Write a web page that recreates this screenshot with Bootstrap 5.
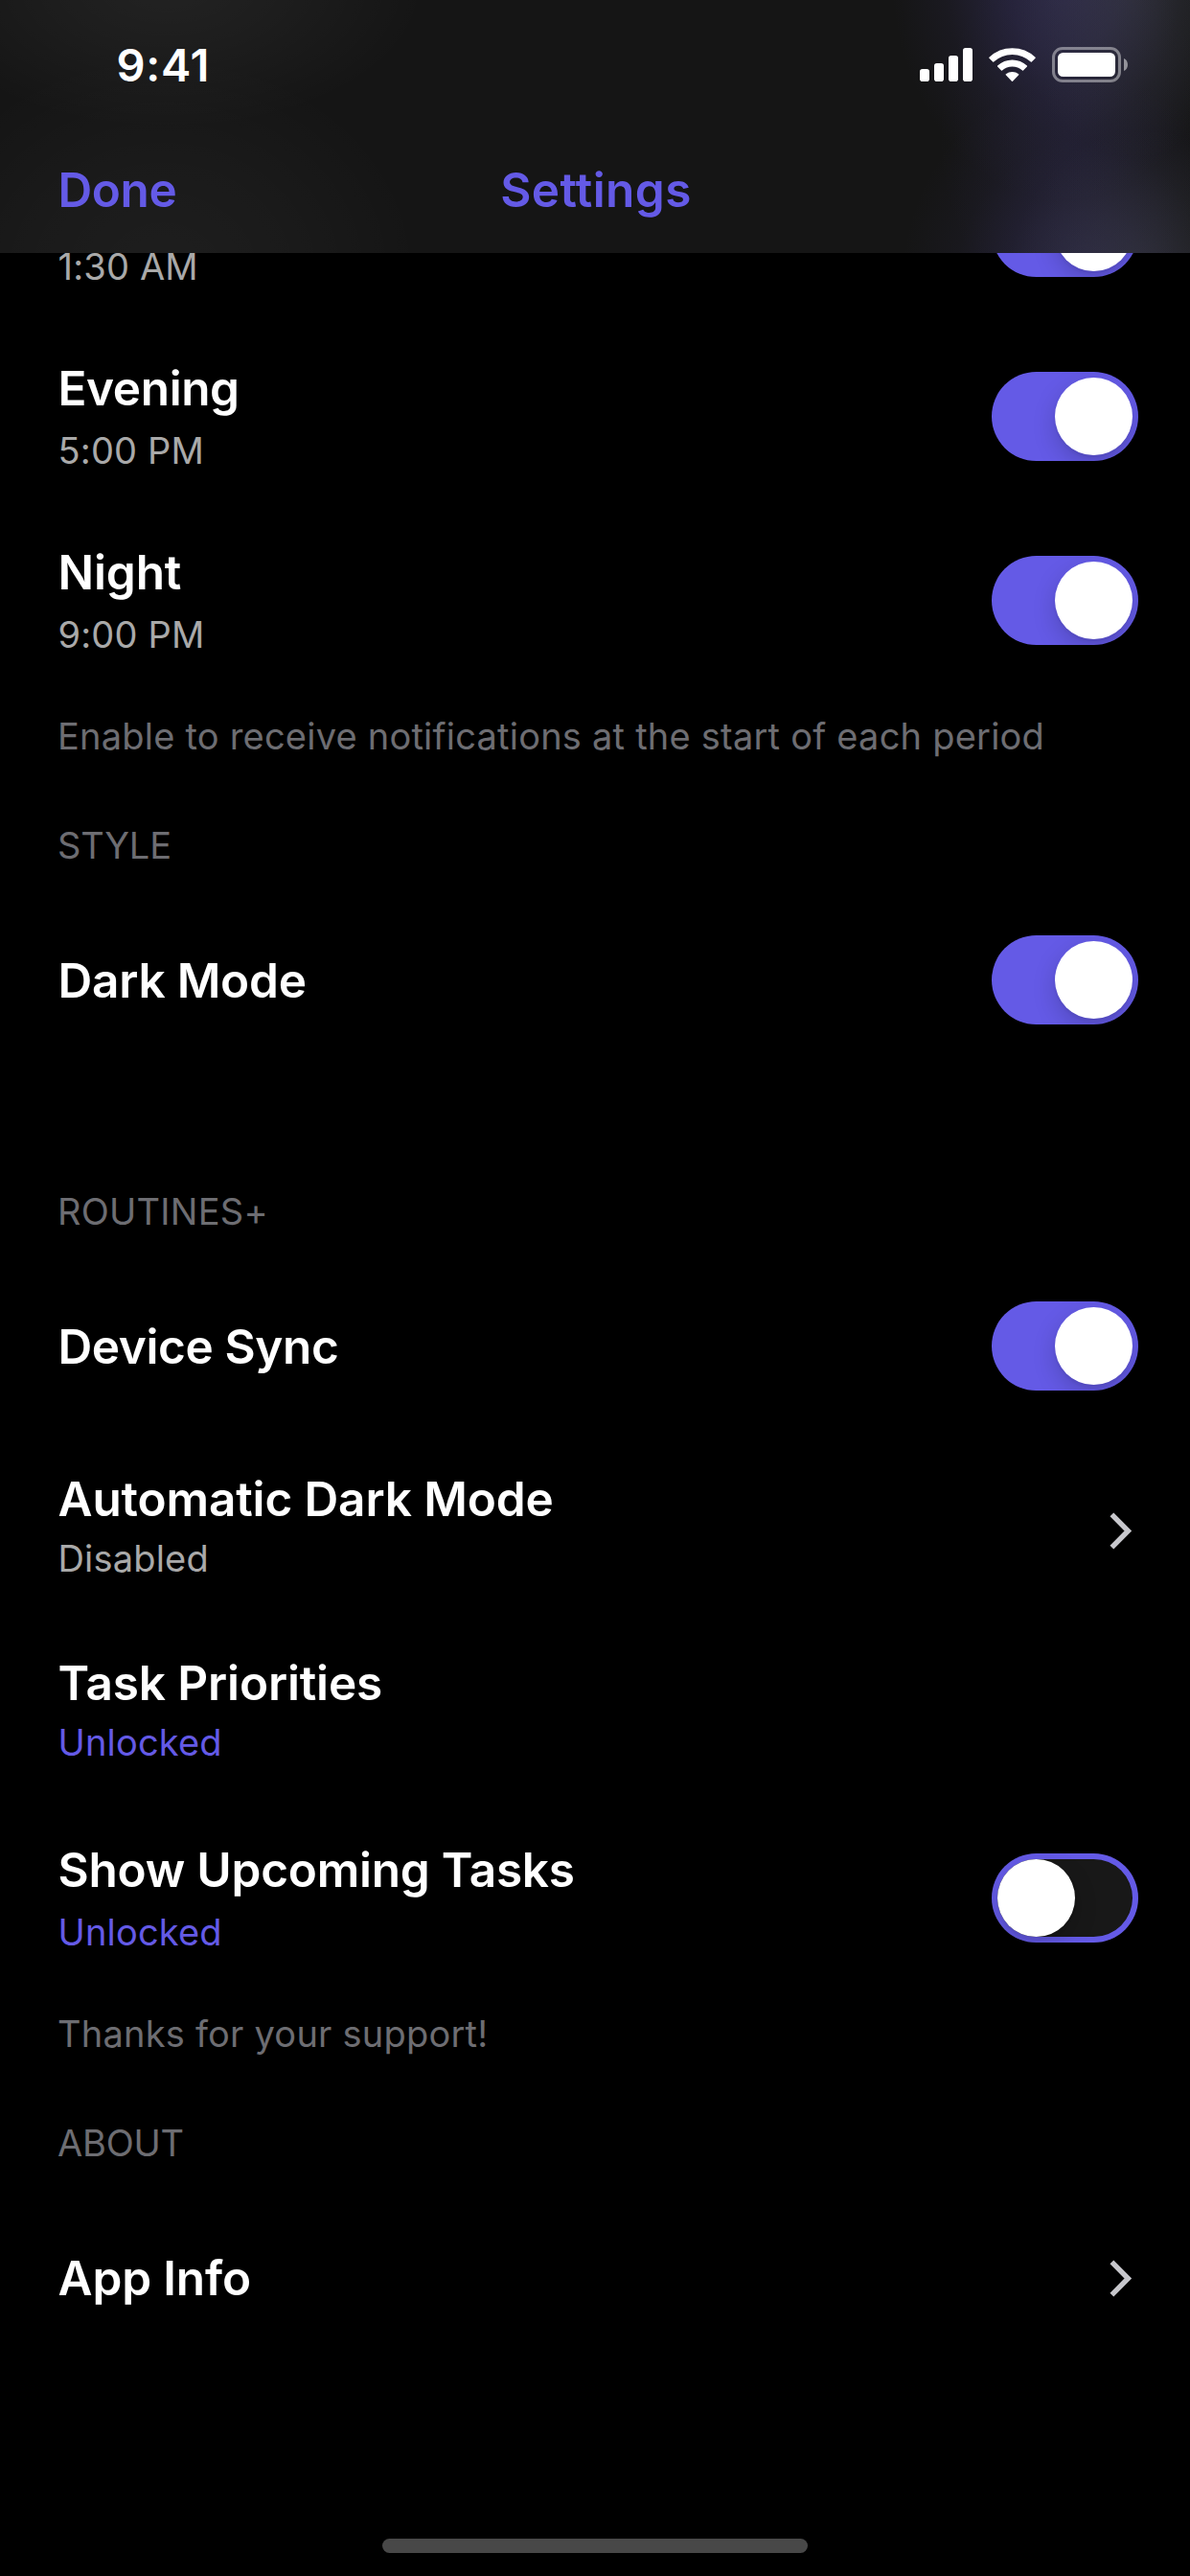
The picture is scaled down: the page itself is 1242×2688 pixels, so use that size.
<!DOCTYPE html>
<html lang="en" data-bs-theme="dark">
<head>
<meta charset="utf-8">
<meta name="viewport" content="width=device-width, initial-scale=1">
<title>Settings</title>
<link href="https://cdn.jsdelivr.net/npm/bootstrap@5.3.0/dist/css/bootstrap.min.css" rel="stylesheet">
<style>
  :root { --accent: #645ae6; }
  body { background: #000; font-family: Inter, "Liberation Sans", sans-serif; height: 2688px; overflow: hidden; }
  .app { height: 2688px; }
  .top-bar {
    height: 264px;
    background:
      radial-gradient(270px 150px at 175px -15px, rgba(255,255,255,.06), rgba(255,255,255,.035) 45%, transparent),
      radial-gradient(270px 230px at 170px 285px, rgba(255,255,255,.04), rgba(255,255,255,.022) 50%, transparent),
      radial-gradient(130px 180px at 1185px -15px, rgba(110,120,105,.17), rgba(110,120,105,.09) 50%, transparent),
      radial-gradient(180px 240px at 1110px -30px, rgba(84,74,160,.35), rgba(84,74,160,.25) 35%, rgba(84,74,160,.08) 70%, transparent),
      radial-gradient(140px 150px at 1195px 285px, rgba(110,120,105,.17), rgba(110,120,105,.09) 50%, transparent),
      radial-gradient(190px 220px at 1130px 300px, rgba(84,74,160,.3), rgba(84,74,160,.2) 35%, rgba(84,74,160,.06) 70%, transparent),
      radial-gradient(140px 200px at 1120px 140px, rgba(84,74,160,.1), rgba(84,74,160,.05) 50%, transparent),
      #151515;
  }
  .status-bar { height: 136px; padding: 0 65px 0 121.5px; }
  .clock { font-size: 47px; font-weight: 600; letter-spacing: .7px; line-height: 60px; }
  .nav-row { height: 128px; padding: 0 60.5px 4px; font-size: 49.5px; font-weight: 600; line-height: 60px; color: var(--accent); }
  .nav-row .btn-done { letter-spacing: -.39px; }
  .nav-row h1 { font: inherit; color: inherit; letter-spacing: .42px; padding-left: 2px; }
  .settings-list { margin-top: -117px; }
  .item { height: 192px; padding: 0 54px 0 60.5px; }
  .item-title { font-size: 49.5px; font-weight: 600; line-height: 60px; min-height: 60px; letter-spacing: -.22px; color: #fff; }
  .item-sub { font-size: 38px; line-height: 49px; margin-top: 11px; letter-spacing: .18px; color: #a9a9a9; }
  .item-sub.unlocked { color: var(--accent); }
  .snug { padding-bottom: 9px; }
  .snug .item-sub { margin-top: 8px; }
  .wide-1 { letter-spacing: -.12px; }
  .wide-2 { letter-spacing: -.38px; }
  .note, .section-label { font-size: 38px; line-height: 49px; padding-left: 60px; color: #6d6d72; }
  .note { margin-top: 21px; margin-bottom: 65px; letter-spacing: .22px; }
  .section-label { font-weight: 400; margin-bottom: 20px; letter-spacing: -.2px; }
  .after-gap { margin-top: 121px; letter-spacing: .25px; }
  .toggle { width: 153px; height: 93px; border-radius: 47px; overflow: hidden; padding: 6px; margin-bottom: 1px; background: var(--accent); flex: none; }
  .toggle.off { background: #181818; box-shadow: inset 0 0 0 6px var(--accent); }
  .knob { width: 81px; height: 81px; border-radius: 50%; background: #fff; box-shadow: 0 9px 24px rgba(0,0,0,.18), 0 3px 3px rgba(0,0,0,.05); }
  .chevron { width: 24px; height: 39px; margin: 1px 6px 0 0; flex: none; }
  .home-bar { width: 444px; height: 15px; border-radius: 8px; background: #484848; margin-bottom: 24px; }
</style>
</head>
<body>
<div class="app d-flex flex-column">
  <header class="top-bar sticky-top flex-shrink-0">
    <div class="status-bar d-flex justify-content-between align-items-center text-white">
      <span class="clock">9:41</span>
      <svg width="217" height="38" viewBox="960 49 217 38" fill="#fff" aria-label="Signal, Wi-Fi, battery">
        <rect x="960" y="72" width="10" height="13" rx="2.8"/>
        <rect x="975" y="66" width="10" height="19" rx="2.8"/>
        <rect x="990" y="58" width="10" height="27" rx="2.8"/>
        <rect x="1005" y="50" width="10" height="35" rx="2.8"/>
        <g stroke="#fff" stroke-width="1.4" stroke-linejoin="round">
          <path d="M1032.9 60.2A34.6 34.6 0 0 1 1080.1 60.2L1076.3 64.1A29 29 0 0 0 1036.7 64.1Z"/>
          <path d="M1041.6 69A22 22 0 0 1 1071.4 69L1067.5 73A16.3 16.3 0 0 0 1045.5 73Z"/>
          <path d="M1050.3 77.8A10 10 0 0 1 1062.7 77.8L1056.5 84.2Z"/>
        </g>
        <rect x="1099.5" y="50.5" width="69" height="34" rx="9.5" fill="none" stroke="#fff" stroke-opacity=".42" stroke-width="3"/>
        <rect x="1104" y="55" width="60" height="25" rx="5.5"/>
        <path d="M1173 61C1178.3 63 1178.3 72 1173 74Z" fill-opacity=".5"/>
      </svg>
    </div>
    <nav class="nav-row row gx-0 align-items-center">
      <div class="col"><span class="btn-done">Done</span></div>
      <div class="col-auto"><h1 class="m-0">Settings</h1></div>
      <div class="col"></div>
    </nav>
  </header>

  <main class="settings-list flex-grow-1">
    <div class="item d-flex justify-content-between align-items-center">
      <div><div class="item-title"></div><div class="item-sub">1:30 AM</div></div>
      <div class="toggle d-flex justify-content-end"><div class="knob"></div></div>
    </div>
    <div class="item d-flex justify-content-between align-items-center">
      <div><div class="item-title wide-2">Evening</div><div class="item-sub">5:00 PM</div></div>
      <div class="toggle d-flex justify-content-end"><div class="knob"></div></div>
    </div>
    <div class="item d-flex justify-content-between align-items-center">
      <div><div class="item-title wide-1">Night</div><div class="item-sub">9:00 PM</div></div>
      <div class="toggle d-flex justify-content-end"><div class="knob"></div></div>
    </div>
    <div class="d-flex flex-column">
      <div class="note">Enable to receive notifications at the start of each period</div>
      <div class="section-label">STYLE</div>
    </div>
    <div class="item d-flex justify-content-between align-items-center">
      <div class="item-title">Dark Mode</div>
      <div class="toggle d-flex justify-content-end"><div class="knob"></div></div>
    </div>
    <div class="d-flex flex-column">
      <div class="section-label after-gap">ROUTINES+</div>
    </div>
    <div class="item d-flex justify-content-between align-items-center">
      <div class="item-title wide-2">Device Sync</div>
      <div class="toggle d-flex justify-content-end"><div class="knob"></div></div>
    </div>
    <div class="item d-flex justify-content-between align-items-center">
      <div class="snug"><div class="item-title wide-1">Automatic Dark Mode</div><div class="item-sub">Disabled</div></div>
      <svg class="chevron" viewBox="0 0 24 39"><path d="M2.4 2.3L19.4 19.5L2.4 36.7" fill="none" stroke="#c7c7cc" stroke-width="5.4"/></svg>
    </div>
    <div class="item d-flex justify-content-between align-items-center">
      <div class="snug"><div class="item-title wide-1">Task Priorities</div><div class="item-sub unlocked">Unlocked</div></div>
    </div>
    <div class="item d-flex justify-content-between align-items-center">
      <div><div class="item-title">Show Upcoming Tasks</div><div class="item-sub unlocked">Unlocked</div></div>
      <div class="toggle off d-flex"><div class="knob"></div></div>
    </div>
    <div class="d-flex flex-column">
      <div class="note">Thanks for your support!</div>
      <div class="section-label">ABOUT</div>
    </div>
    <div class="item d-flex justify-content-between align-items-center">
      <div class="item-title wide-1">App Info</div>
      <svg class="chevron" viewBox="0 0 24 39"><path d="M2.4 2.3L19.4 19.5L2.4 36.7" fill="none" stroke="#c7c7cc" stroke-width="5.4"/></svg>
    </div>
  </main>
  <div class="home-bar align-self-center flex-shrink-0"></div>
</div>
<script src="https://cdn.jsdelivr.net/npm/bootstrap@5.3.0/dist/js/bootstrap.bundle.min.js"></script>
</body>
</html>
